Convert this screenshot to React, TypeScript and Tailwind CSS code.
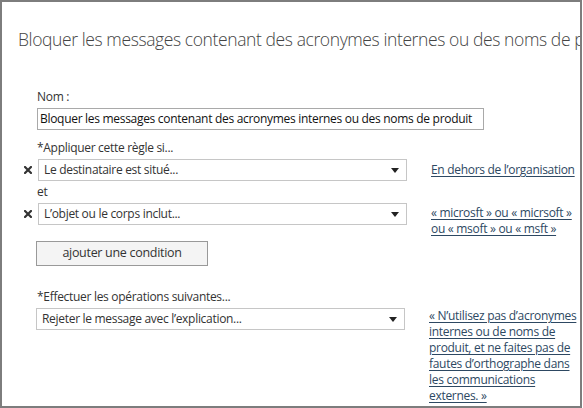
function Arrow() {
  return (
    <svg width="8" height="5" viewBox="0 0 8 5" className="shrink-0">
      <path d="M0 0h8L4 5z" fill="#222" />
    </svg>
  );
}

function Remove() {
  return (
    <div className="w-[36px] h-[22px] flex items-center justify-end pr-[6px] shrink-0">
      <svg width="8" height="8" viewBox="0 0 8 8">
        <path d="M1 1l6 6M7 1L1 7" stroke="#333" strokeWidth="2.2" strokeLinecap="square" />
      </svg>
    </div>
  );
}

function Select({ value }: { value: string }) {
  return (
    <div className="w-[369px] h-[22px] border border-[#c6c6c6] bg-white flex items-center justify-between pl-[5px] pr-[7px] shrink-0">
      <span className="text-[#333]">{value}</span>
      <Arrow />
    </div>
  );
}

const link =
  "ml-[24px] leading-[16px] underline underline-offset-[2px] text-[#2d4862] decoration-[#2d4862] whitespace-nowrap";

export default function App() {
  return (
    <div
      className="w-[582px] h-[408px] border-2 border-[#7d7d7d] bg-white overflow-hidden text-[12px] tracking-[-0.3px] text-[#333]"
      style={{ fontFamily: '"Open Sans", "Noto Sans", sans-serif' }}
    >
      <h1 className="whitespace-nowrap pl-[16px] pt-[24px] text-[17.5px] tracking-[-0.4px] font-light text-[#444] leading-[26px]">
        Bloquer les messages contenant des acronymes internes ou des noms de produit
      </h1>

      <div className="pl-[35px] pt-[37px]">
        <div className="leading-[16px]">Nom :</div>
        <div className="mt-[3px] w-[447px] h-[22px] border border-[#a9a9a9] flex items-center pl-[2px] text-[#111] whitespace-nowrap overflow-hidden">
          Bloquer les messages contenant des acronymes internes ou des noms de produit
        </div>
        <div className="mt-[10px] leading-[16px]">*Appliquer cette règle si...</div>
      </div>

      <div className="flex items-start mt-[3px]">
        <Remove />
        <Select value="Le destinataire est situé..." />
        <a className={`${link} mt-[3px]`}>En dehors de l’organisation</a>
      </div>

      <div className="pl-[35px] mt-[3px] leading-[16px]">et</div>

      <div className="flex items-start mt-[3px]">
        <Remove />
        <Select value="L’objet ou le corps inclut..." />
        <a className={`${link} mt-[2px] leading-[15px]`}>
          « microsft » ou « micrsoft »
          <br />
          ou « msoft » ou « msft »
        </a>
      </div>

      <div className="pl-[34px] mt-[4px]">
        <button className="w-[172px] h-[25px] border border-[#999] bg-[#f4f4f4] text-[12.5px] text-[#333] leading-none">
          ajouter une condition
        </button>
        <div className="mt-[23px] pl-[1px] leading-[16px]">*Effectuer les opérations suivantes...</div>
      </div>

      <div className="flex items-start mt-[3px] pl-[34px]">
        <Select value="Rejeter le message avec l’explication..." />
        <a className={`${link} leading-[16.7px]`}>
          « N’utilisez pas d’acronymes
          <br />
          internes ou de noms de
          <br />
          produit, et ne faites pas de
          <br />
          fautes d’orthographe dans
          <br />
          les communications
          <br />
          externes. »
        </a>
      </div>
    </div>
  );
}
